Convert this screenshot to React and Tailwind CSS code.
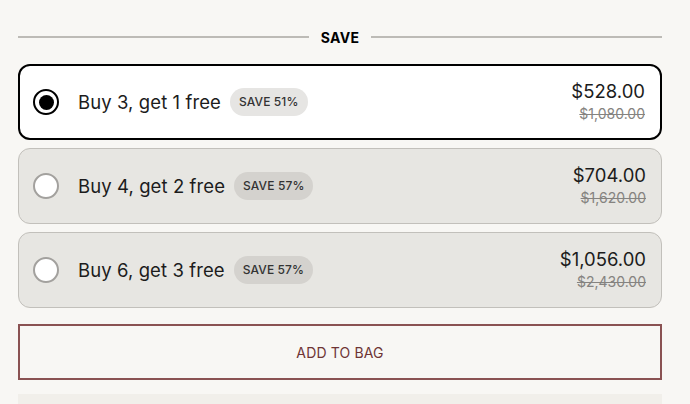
import React, { useState } from "react";

const OPTIONS = [
  { id: 1, label: "Buy 3, get 1 free", save: "SAVE 51%", price: "$528.00", was: "$1,080.00" },
  { id: 2, label: "Buy 4, get 2 free", save: "SAVE 57%", price: "$704.00", was: "$1,620.00" },
  { id: 3, label: "Buy 6, get 3 free", save: "SAVE 57%", price: "$1,056.00", was: "$2,430.00" },
];

function Radio({ checked }) {
  if (checked) {
    return (
      <span className="w-[26px] h-[26px] rounded-full border-[2.5px] border-black bg-white flex items-center justify-center shrink-0">
        <span className="w-[15px] h-[15px] rounded-full bg-black" />
      </span>
    );
  }
  return <span className="w-[26px] h-[26px] rounded-full border-2 border-[#a3a19e] bg-white shrink-0" />;
}

export default function App() {
  const [selected, setSelected] = useState(1);

  return (
    <div className="h-screen overflow-hidden bg-[#f8f7f4] pl-[18px] pr-[28px] pt-[26px] font-['Inter','Liberation_Sans',sans-serif] text-[#1c1c1c]">
      <div className="flex items-center gap-3 h-[22px]">
        <div className="flex-1 h-[2px] bg-[#bdbbb6]" />
        <span className="text-[14px] font-bold tracking-[0.02em] text-black">SAVE</span>
        <div className="flex-1 h-[2px] bg-[#bdbbb6]" />
      </div>

      <div className="mt-[16px] flex flex-col gap-2">
        {OPTIONS.map((o) => {
          const on = o.id === selected;
          return (
            <button
              key={o.id}
              onClick={() => setSelected(o.id)}
              className={
                "h-[76px] w-full rounded-[12px] flex items-center pr-[15px] text-left " +
                (on ? "bg-white border-2 border-black pl-[13px]" : "bg-[#e7e6e2] border border-[#c2c0bb] pl-[14px]")
              }
            >
              <Radio checked={on} />
              <span className="ml-[19px] text-[18.5px] leading-none tracking-[0.005em]">{o.label}</span>
              <span
                className={
                  "ml-[9px] h-[28px] px-[9px] rounded-full flex items-center text-[12px] font-medium tracking-[0.01em] text-[#333] " +
                  (on ? "bg-[#e6e5e3]" : "bg-[#d4d2ce]")
                }
              >
                {o.save}
              </span>
              <span className="ml-auto flex flex-col items-end">
                <span className="text-[18.5px] leading-[22px]">{o.price}</span>
                <span className="mt-[2px] text-[14px] leading-[20px] text-[#858380] line-through">{o.was}</span>
              </span>
            </button>
          );
        })}
      </div>

      <button className="mt-[16px] w-full h-[56px] border-2 border-[#8a5252] text-[#6e3434] text-[14px] tracking-[0.01em] flex items-center justify-center">
        ADD TO BAG
      </button>

      <div className="mt-[14px] h-[40px] bg-[#f1efea]" />
    </div>
  );
}
